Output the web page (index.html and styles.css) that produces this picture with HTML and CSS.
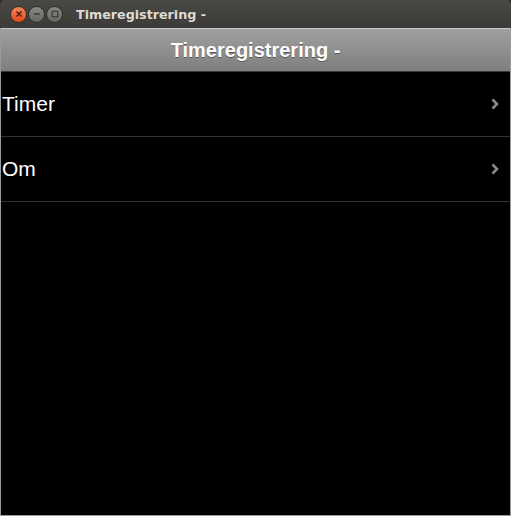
FILE: index.html
```html
<!DOCTYPE html>
<html>
<head>
    <meta charset="UTF-8">
    <title>Timeregistrering -</title>
    <link rel="stylesheet" href="styles.css">
</head>
<body>
<div class="window">
    <div class="titlebar">
        <div class="buttons">
            <span class="wbtn close">
                <svg width="8" height="8" viewBox="0 0 8 8"><path d="M1.5 1.5L6.5 6.5M6.5 1.5L1.5 6.5" stroke="#4a1a0a" stroke-width="1.4"/></svg>
            </span>
            <span class="wbtn">
                <svg width="8" height="8" viewBox="0 0 8 8"><path d="M1 4H7" stroke="#3a3a38" stroke-width="1.4"/></svg>
            </span>
            <span class="wbtn">
                <svg width="8" height="8" viewBox="0 0 8 8"><rect x="1.2" y="1.2" width="5.6" height="5.6" fill="none" stroke="#3a3a38" stroke-width="1.2"/></svg>
            </span>
        </div>
        <span class="wtitle">Timeregistrering -</span>
    </div>
    <div class="app">
        <div class="header">Timeregistrering -</div>
        <ul class="list">
            <li class="item">
                <span>Timer</span>
                <svg class="chev" width="10" height="12" viewBox="0 0 10 12"><path d="M2.5 1.5L7 6L2.5 10.5" fill="none" stroke="#8a8a8a" stroke-width="2.6"/></svg>
            </li>
            <li class="item">
                <span>Om</span>
                <svg class="chev" width="10" height="12" viewBox="0 0 10 12"><path d="M2.5 1.5L7 6L2.5 10.5" fill="none" stroke="#8a8a8a" stroke-width="2.6"/></svg>
            </li>
        </ul>
    </div>
</div>
</body>
</html>
```

FILE: styles.css
```css
* {
    margin: 0;
    padding: 0;
}
html, body {
    width: 511px;
    height: 516px;
    background-color: #2b2a27;
    overflow: hidden;
}
.window {
    width: 511px;
    height: 516px;
    display: flex;
    flex-direction: column;
}
.titlebar {
    height: 28px;
    background: linear-gradient(#4a4944, #3c3b37);
    border-radius: 5px 5px 0 0;
    display: flex;
    align-items: center;
    padding-left: 10px;
    box-sizing: border-box;
}
.buttons {
    display: flex;
    gap: 1px;
}
.wbtn {
    width: 17px;
    height: 17px;
    border-radius: 50%;
    background: linear-gradient(#8a8984, #66655f);
    border: 1px solid #2e2d29;
    box-sizing: border-box;
    display: flex;
    align-items: center;
    justify-content: center;
}
.wbtn.close {
    background: linear-gradient(#f58559, #df4a15);
}
.wtitle {
    margin-left: 13px;
    color: #dfdbd2;
    font-family: "DejaVu Sans", sans-serif;
    font-weight: bold;
    font-size: 12.7px;
}
.app {
    flex: 1;
    background-color: #000;
    border: 1px solid #9a9a9a;
    border-top: none;
    display: flex;
    flex-direction: column;
}
.header {
    height: 42px;
    border-top: 1px solid #c8c8c8;
    border-bottom: 1px solid #3a3a3a;
    background: linear-gradient(#a0a0a0, #7e7e7e);
    color: #fff;
    font-family: "Liberation Sans", Arial, sans-serif;
    font-weight: bold;
    font-size: 20px;
    text-shadow: 0 1px 0 #555;
    display: flex;
    align-items: center;
    justify-content: center;
}
.list {
    list-style: none;
}
.item {
    height: 64px;
    border-bottom: 1px solid #333;
    display: flex;
    align-items: center;
    justify-content: space-between;
    padding: 0 10px 0 1px;
    color: #fff;
    font-family: "Liberation Sans", Arial, sans-serif;
    font-size: 21px;
}
```
